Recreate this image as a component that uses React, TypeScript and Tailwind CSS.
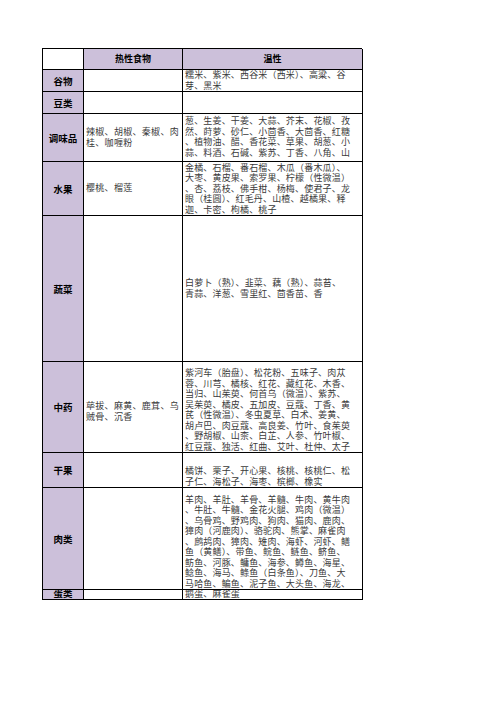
import React from "react";

type Row = {
  label: string;
  h: number;
  hot: string[];
  warm: string[];
  warmAlign: "end" | "center" | "start";
  hotShift?: boolean;
};

const rows: Row[] = [
  {
    label: "谷物",
    h: 22,
    hot: [],
    warm: ["糯米、紫米、西谷米（西米）、高粱、谷", "芽、黑米"],
    warmAlign: "end",
  },
  { label: "豆类", h: 22, hot: [], warm: [], warmAlign: "end" },
  {
    label: "调味品",
    h: 48,
    hot: ["辣椒、胡椒、秦椒、肉", "桂、咖喱粉"],
    warm: [
      "葱、生姜、干姜、大蒜、芥末、花椒、孜",
      "然、莳萝、砂仁、小茴香、大茴香、红糖",
      "、植物油、醋、香花菜、草果、胡葱、小",
      "蒜、料酒、石碱、紫苏、丁香、八角、山",
    ],
    warmAlign: "start",
  },
  {
    label: "水果",
    h: 54,
    hot: ["樱桃、榴莲"],
    warm: [
      "金橘、石榴、番石榴、木瓜（番木瓜）、",
      "大枣、黄皮果、索罗果、柠檬（性微温）",
      "、杏、荔枝、佛手柑、杨梅、使君子、龙",
      "眼（桂圆）、红毛丹、山楂、越橘果、释",
      "迦、卡密、枸橘、桃子",
    ],
    warmAlign: "end",
  },
  {
    label: "蔬菜",
    h: 146,
    hot: [],
    warm: ["白萝卜（熟）、韭菜、藕（熟）、蒜苔、", "青蒜、洋葱、雪里红、茴香苗、香"],
    warmAlign: "center",
  },
  {
    label: "中药",
    h: 91,
    hot: ["荜拔、麻黄、鹿茸、乌", "贼骨、沉香"],
    hotShift: true,
    warm: [
      "紫河车（胎盘）、松花粉、五味子、肉苁",
      "蓉、川芎、橘核、红花、藏红花、木香、",
      "当归、山茱萸、何首乌（微温）、紫苏、",
      "吴茱萸、橘皮、五加皮、豆蔻、丁香、黄",
      "芪（性微温）、冬虫夏草、白术、姜黄、",
      "胡卢巴、肉豆蔻、高良姜、竹叶、食茱萸",
      "、野胡椒、山柰、白芷、人参、竹叶椒、",
      "红豆蔻、独活、红曲、艾叶、杜仲、太子",
    ],
    warmAlign: "end",
  },
  {
    label: "干果",
    h: 35,
    hot: [],
    warm: ["橘饼、栗子、开心果、核桃、核桃仁、松", "子仁、海松子、海枣、槟榔、橡实"],
    warmAlign: "end",
  },
  {
    label: "肉类",
    h: 102,
    hot: [],
    warm: [
      "羊肉、羊肚、羊骨、羊髓、牛肉、黄牛肉",
      "、牛肚、牛髓、金花火腿、鸡肉（微温）",
      "、乌骨鸡、野鸡肉、狗肉、猫肉、鹿肉、",
      "獐肉（河鹿肉）、骆驼肉、熊掌、麻雀肉",
      "、鹧鸪肉、獐肉、雉肉、海虾、河虾、鳝",
      "鱼（黄鳝）、带鱼、鲩鱼、鲢鱼、鲚鱼、",
      "鲂鱼、河豚、鳙鱼、海参、鳟鱼、海星、",
      "鲶鱼、海马、鲦鱼（白条鱼）、刀鱼、大",
      "马哈鱼、鳊鱼、泥子鱼、大头鱼、海龙、",
    ],
    warmAlign: "end",
  },
  { label: "蛋类", h: 10, hot: [], warm: ["鹅蛋、麻雀蛋"], warmAlign: "end" },
];

const font = { fontFamily: '"Noto Sans CJK SC", "Noto Sans", sans-serif' };

function Lines({ lines }: { lines: string[] }) {
  return (
    <>
      {lines.map((l, i) => (
        <div key={i} className="whitespace-nowrap leading-[10.5px]">
          {l}
        </div>
      ))}
    </>
  );
}

export default function App() {
  return (
    <div className="min-h-[702px] bg-white pl-[42px] pt-[48px]" style={font}>
      <div className="grid w-[320px] grid-cols-[41px_99px_180px] border-l border-t border-black">
        {/* 表头 */}
        <div className="h-[21px] border-b border-r border-black bg-white" />
        <div className="flex h-[21px] items-center justify-center border-b border-r border-black bg-[#ccc0da] text-[9px] font-bold text-black">
          热性食物
        </div>
        <div className="flex h-[21px] items-center justify-center border-b border-r border-black bg-[#ccc0da] text-[9px] font-bold text-black">
          温性
        </div>

        {rows.map((r) => (
          <React.Fragment key={r.label}>
            <div
              className={`flex justify-center overflow-hidden border-b border-r border-black bg-[#ccc0da] text-[9.5px] font-bold leading-[12px] text-black ${
                r.h < 14 ? "items-end" : "items-center"
              }`}
              style={{ height: r.h }}
            >
              {r.label}
            </div>
            <div
              className={`flex flex-col justify-center overflow-hidden border-b border-r border-black pl-[2px] text-[9px] tracking-[0.3px] text-[#3a3a3a] ${
                r.hotShift ? "pt-[9px]" : ""
              }`}
              style={{ height: r.h }}
            >
              <Lines lines={r.hot} />
            </div>
            <div
              className={`flex flex-col overflow-hidden border-b border-r border-black pl-[2px] text-[9px] tracking-[0.17px] text-[#3a3a3a] ${
                r.warmAlign === "end"
                  ? "justify-end"
                  : r.warmAlign === "center"
                    ? "justify-center"
                    : "justify-start pt-[2px]"
              }`}
              style={{ height: r.h }}
            >
              <Lines lines={r.warm} />
            </div>
          </React.Fragment>
        ))}
      </div>
    </div>
  );
}
